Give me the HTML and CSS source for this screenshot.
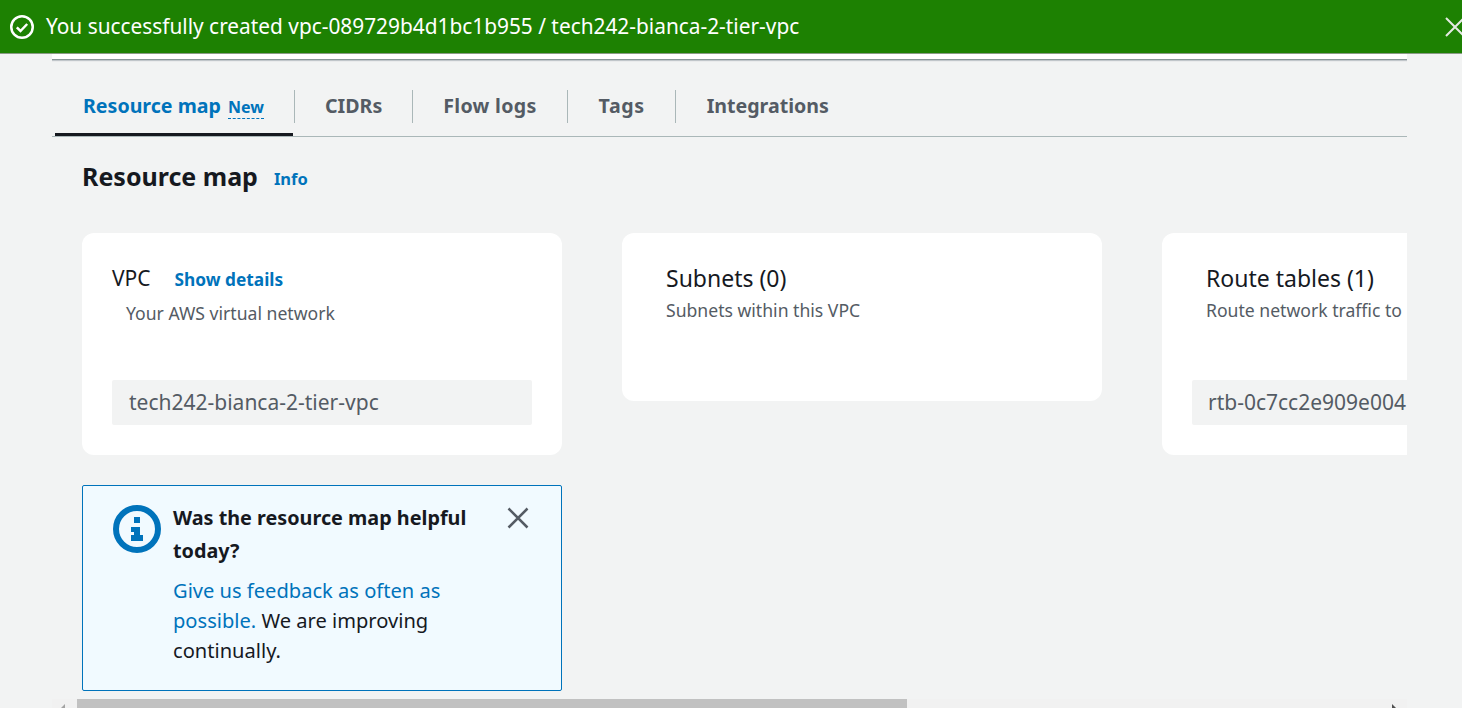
FILE: index.html
```html
<!DOCTYPE html>
<html>
<head>
    <title>VPC Resource map</title>
    <link rel="stylesheet" href="styles.css">
</head>
<body>
    <div class="flash">
        <svg class="flash-icon" viewBox="0 0 24 24" width="24" height="24">
            <circle cx="12" cy="12" r="10.75" fill="none" stroke="#fff" stroke-width="2.5"/>
            <path d="M6.800 12.300l3.700 3.700L17.200 9" fill="none" stroke="#fff" stroke-width="2.500"/>
        </svg>
        <span class="flash-text">You successfully created vpc-089729b4d1bc1b955 / tech242-bianca-2-tier-vpc</span>
        <svg class="flash-close" viewBox="0 0 20 20" width="20" height="20">
            <path d="M1 1l18 18M19 1L1 19" fill="none" stroke="#e4e9e2" stroke-width="2"/>
        </svg>
    </div>

    <div class="page">
        <div class="top-card"></div>

        <div class="tabs">
            <div class="tab tab-active">Resource map <span class="tab-new">New</span></div>
            <div class="tab tab-cidrs">CIDRs</div>
            <div class="tab">Flow logs</div>
            <div class="tab tab-tags">Tags</div>
            <div class="tab tab-last">Integrations</div>
        </div>

        <div class="heading">
            <h2>Resource map</h2>
            <a class="info">Info</a>
        </div>

        <div class="cards">
            <div class="card">
                <div class="card-title-row">
                    <span class="card-title-vpc">VPC</span>
                    <a class="show-details">Show details</a>
                </div>
                <div class="card-sub card-sub-vpc">Your AWS virtual network</div>
                <div class="chip">tech242-bianca-2-tier-vpc</div>
            </div>
            <div class="card card-short">
                <div class="card-title">Subnets (0)</div>
                <div class="card-sub">Subnets within this VPC</div>
            </div>
            <div class="card card-route">
                <div class="card-title">Route tables (1)</div>
                <div class="card-sub">Route network traffic to</div>
                <div class="chip chip-route">rtb-0c7cc2e909e004</div>
            </div>
        </div>

        <div class="feedback">
            <svg class="feedback-icon" viewBox="0 0 48 48" width="48" height="48">
                <circle cx="24" cy="24" r="21" fill="none" stroke="#0073bb" stroke-width="6"/>
                <path d="M21 12h6v6h-6zM18 22h9v8h3v6H18v-6h3v-3h-3z" fill="#0073bb"/>
            </svg>
            <div class="feedback-body">
                <div class="feedback-title">Was the resource map helpful today?</div>
                <p class="feedback-text"><a>Give us feedback as often as possible.</a> We are improving continually.</p>
            </div>
            <svg class="feedback-close" viewBox="0 0 22 22" width="22" height="22">
                <path d="M1.500 1.500l19 19M20.500 1.500l-19 19" fill="none" stroke="#545b64" stroke-width="2.500"/>
            </svg>
        </div>
    </div>

    <div class="scrollbar">
        <div class="scroll-left"></div>
        <div class="scroll-thumb"></div>
        <div class="scroll-right"></div>
    </div>
</body>
</html>
```

FILE: styles.css
```css
html, body {
    margin: 0;
    padding: 0;
    height: 708px;
    overflow: hidden;
}

body {
    background-color: #f2f3f3;
    font-family: "Noto Sans", "Open Sans", sans-serif;
    color: #16191f;
    display: flex;
    flex-direction: column;
}

a {
    color: #0073bb;
}

/* green banner */
.flash {
    height: 53px;
    flex: none;
    display: flex;
    align-items: center;
    background-color: #1d8102;
    border-bottom: 1px solid #8a9a86;
    padding-left: 10px;
    color: #fff;
    overflow: hidden;
}

.flash-icon {
    flex: none;
    margin-right: 12px;
}

.flash-text {
    font-size: 20.85px;
    line-height: 28px;
    margin-bottom: 2px;
    flex: 1;
}

.flash-close {
    flex: none;
    margin-right: -3px;
}

/* main column */
.page {
    margin-left: 52px;
    width: 1355px;
    flex: 1;
    min-height: 0;
    overflow: hidden;
}

.top-card {
    height: 5px;
    background-color: #fff;
    border-bottom: 1px solid #879596;
    box-shadow: 0 1px 1px rgba(0, 21, 41, 0.2);
}

.tabs {
    display: flex;
    height: 46px;
    margin-top: 30px;
    padding-left: 3px;
    border-bottom: 1px solid #aab7b8;
    align-items: flex-start;
}

.tab {
    height: 33px;
    line-height: 31px;
    font-size: 19.6px;
    font-weight: 700;
    letter-spacing: 0.3px;
    color: #545b64;
    border-left: 1px solid #aab7b8;
    padding: 0 30px;
    white-space: nowrap;
}

.tab-active {
    width: 238px;
    height: 46px;
    box-sizing: border-box;
    padding: 0 0 0 28px;
    margin-right: 1px;
    letter-spacing: 0;
    color: #0073bb;
    border-left: none;
    border-bottom: 3px solid #16191f;
}

.tab-cidrs,
.tab-last {
    letter-spacing: 0;
}

.tab-tags {
    letter-spacing: 0.6px;
    padding-left: 31px;
}

.tab-last {
    padding-left: 31px;
}

.tab-new {
    font-size: 16px;
    border-bottom: 1px dashed #0073bb;
    margin-left: 2px;
}

/* heading */
.heading {
    display: flex;
    align-items: flex-start;
    padding: 23px 0 0 30px;
    height: 42px;
}

.heading h2 {
    margin: 0;
    font-size: 25px;
    font-weight: 700;
    line-height: 32px;
}

.info {
    font-size: 16.5px;
    font-weight: 700;
    line-height: 38px;
    margin-left: 16px;
}

/* cards */
.cards {
    display: flex;
    gap: 60px;
    margin-top: 31px;
    padding-left: 30px;
    align-items: flex-start;
}

.card {
    flex: none;
    width: 480px;
    height: 222px;
    box-sizing: border-box;
    background-color: #fff;
    border-radius: 12px;
    padding: 30px 30px 0 30px;
    overflow: hidden;
}

.card-short {
    height: 168px;
    padding-left: 44px;
}

.card-route {
    padding-left: 44px;
}

.card-title-row {
    display: flex;
    align-items: baseline;
    height: 30px;
}

.card-title-vpc {
    font-size: 21px;
    line-height: 30px;
}

.card-title {
    font-size: 23px;
    line-height: 30px;
}

.show-details {
    font-size: 17.3px;
    font-weight: 700;
    margin-left: 24px;
}

.card-sub {
    font-size: 17.6px;
    line-height: 24px;
    margin-top: 5px;
    color: #545b64;
    white-space: nowrap;
}

.card-sub-vpc {
    margin: 8px 0 0 14px;
}

.chip {
    height: 45px;
    line-height: 45px;
    margin-top: 55px;
    padding-left: 17px;
    font-size: 21px;
    color: #545b64;
    background-color: #f2f3f3;
    border-radius: 2px;
    white-space: nowrap;
}

.chip-route {
    margin: 58px 0 0 -14px;
    width: 420px;
    padding-left: 16px;
}

/* feedback box */
.feedback {
    display: flex;
    width: 480px;
    height: 206px;
    box-sizing: border-box;
    margin: 30px 0 0 30px;
    padding: 19px 0 0 30px;
    background-color: #f1faff;
    border: 1px solid #0073bb;
    border-radius: 2px;
}

.feedback-icon {
    flex: none;
    margin-right: 12px;
}

.feedback-body {
    width: 310px;
    flex: none;
}

.feedback-title {
    font-size: 19.8px;
    font-weight: 700;
    line-height: 33px;
    margin-top: -4px;
}

.feedback-text {
    margin: 9px 0 0 0;
    font-size: 20.1px;
    line-height: 30px;
}

.feedback-close {
    flex: none;
    margin: 2px 0 0 24px;
}

/* bottom scrollbar */
.scrollbar {
    position: absolute;
    left: 52px;
    top: 699px;
    width: 1355px;
    height: 9px;
    background-color: #f1f1f1;
    display: flex;
    overflow: hidden;
}

.scroll-left {
    width: 25px;
    position: relative;
}

.scroll-left::after {
    content: "";
    position: absolute;
    left: 9px;
    top: 5px;
    border-right: 4px solid #a3a3a3;
    border-top: 4px solid transparent;
    border-bottom: 4px solid transparent;
}

.scroll-thumb {
    width: 830px;
    background-color: #c1c1c1;
}

.scroll-right {
    flex: 1;
    position: relative;
}

.scroll-right::after {
    content: "";
    position: absolute;
    right: 11px;
    top: 5px;
    border-left: 4px solid #505050;
    border-top: 4px solid transparent;
    border-bottom: 4px solid transparent;
}
```
